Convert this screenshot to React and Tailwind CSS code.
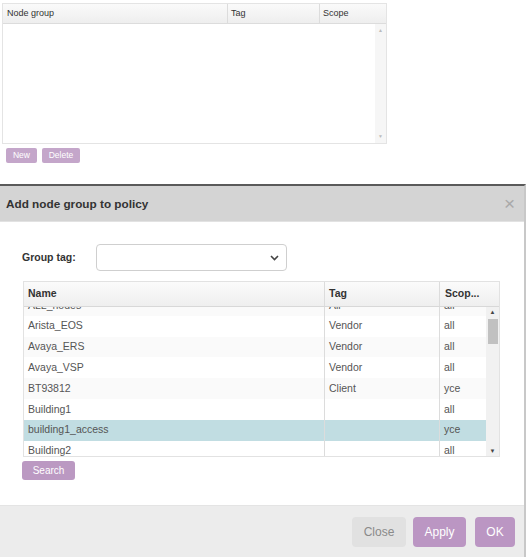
import React from 'react';

const rows = [
  { name: 'ALL_nodes', tag: 'All', scope: 'all' },
  { name: 'Arista_EOS', tag: 'Vendor', scope: 'all' },
  { name: 'Avaya_ERS', tag: 'Vendor', scope: 'all' },
  { name: 'Avaya_VSP', tag: 'Vendor', scope: 'all' },
  { name: 'BT93812', tag: 'Client', scope: 'yce' },
  { name: 'Building1', tag: '', scope: 'all' },
  { name: 'building1_access', tag: '', scope: 'yce', selected: true },
  { name: 'Building2', tag: '', scope: 'all' },
];

export default function App() {
  return (
    <div className="relative w-[529px] h-[557px] bg-white overflow-hidden font-['Liberation_Sans',Arial,sans-serif]">
      {/* Node group table */}
      <div className="pt-[3px] pl-[2px]">
        <div className="w-[385px] h-[141px] border border-[#e4e4e4] flex flex-col">
          <div className="flex h-[20px] shrink-0 border-b border-[#dcdcdc] bg-gradient-to-b from-[#fafafa] to-[#eeeeee] text-[9px] text-[#333]">
            <div className="w-[225px] px-[4px] flex items-center border-r border-[#dcdcdc]">Node group</div>
            <div className="w-[92px] px-[3px] flex items-center border-r border-[#dcdcdc]">Tag</div>
            <div className="flex-1 px-[3px] flex items-center">Scope</div>
          </div>
          <div className="flex-1 flex">
            <div className="flex-1" />
            <div className="w-[11px] bg-[#f6f6f6] flex flex-col items-center justify-between py-[3px] text-[5px] text-[#bbb]">
              <span>▲</span>
              <span>▼</span>
            </div>
          </div>
        </div>
        <div className="flex gap-[5px] mt-[4px] ml-[4px]">
          <button className="h-[15px] w-[31px] rounded-[2px] bg-[#c4a6ca] text-white text-[8.5px] leading-none">New</button>
          <button className="h-[15px] w-[38px] rounded-[2px] bg-[#c4a6ca] text-white text-[8.5px] leading-none">Delete</button>
        </div>
      </div>

      {/* Dialog */}
      <div className="absolute left-0 top-[184px] w-[526px] h-[373px] bg-white border-t-2 border-r-2 border-t-[#5a5a5a] border-r-[#c8c8c8] flex flex-col">
        <div className="h-[36px] shrink-0 bg-[#d4d4d4] flex items-center justify-between pl-[6px] pr-[9px] border-b border-[#e2e2e2]">
          <span className="text-[11.75px] font-bold text-[#333]">Add node group to policy</span>
          <span className="text-[19px] text-[#a9a9a9] leading-none">×</span>
        </div>

        <div className="flex-1 pl-[22px] pt-[22px]">
          <div className="flex items-center">
            <span className="w-[74px] text-[10.5px] font-bold text-[#333]">Group tag:</span>
            <div className="w-[191px] h-[27px] border border-[#cfcfcf] rounded-[4px] flex items-center justify-end pr-[7px]">
              <svg width="9" height="6" viewBox="0 0 9 6">
                <path d="M1 1 L4.5 4.5 L8 1" fill="none" stroke="#444" strokeWidth="1.6" />
              </svg>
            </div>
          </div>

          <div className="mt-[10px] ml-[1px] w-[477px] h-[176px] border border-[#e2e2e2] flex flex-col text-[10.5px]">
            <div className="flex h-[25px] shrink-0 border-b border-[#d8d8d8] bg-gradient-to-b from-[#fbfbfb] to-[#efefef] font-bold text-[#333]">
              <div className="w-[301px] px-[4px] flex items-center border-r border-[#dcdcdc]">Name</div>
              <div className="w-[115px] px-[4px] flex items-center border-r border-[#dcdcdc]">Tag</div>
              <div className="flex-1 px-[5px] flex items-center">Scop...</div>
            </div>
            <div className="flex-1 flex overflow-hidden">
              <div className="flex-1 overflow-hidden">
                <div className="-mt-[12px]">
                  {rows.map((r, i) => (
                    <div
                      key={r.name}
                      className={
                        'flex h-[20.8px] text-[#555] ' +
                        (r.selected ? 'bg-[#c1dde2]' : i % 2 ? 'bg-white' : 'bg-[#fafafa]')
                      }
                    >
                      <div className="w-[301px] px-[4px] flex items-center border-r border-[#dcdcdc]">{r.name}</div>
                      <div className="w-[115px] px-[4px] flex items-center border-r border-[#dcdcdc]">{r.tag}</div>
                      <div className="flex-1 px-[4px] flex items-center">{r.scope}</div>
                    </div>
                  ))}
                </div>
              </div>
              <div className="w-[13px] bg-[#f1f1f1] flex flex-col items-center py-[2px]">
                <span className="text-[6px] text-[#444] leading-none">▲</span>
                <div className="mt-[4px] w-[10px] h-[25px] bg-[#c1c1c1]" />
                <div className="flex-1" />
                <span className="text-[6px] text-[#444] leading-none">▼</span>
              </div>
            </div>
          </div>

          <button className="mt-[4px] h-[19px] w-[53px] rounded-[3px] bg-[#bb99c2] text-white text-[10px]">Search</button>
        </div>

        <div className="h-[52px] shrink-0 bg-[#ececec] border-t border-[#e4e4e4] flex items-start justify-end pt-[11px] pr-[9px]">
          <button className="h-[30px] w-[54px] mr-[7px] rounded-[4px] bg-[#e1e1e1] text-[#8a8a8a] text-[12px]">Close</button>
          <button className="h-[30px] w-[53px] mr-[9px] rounded-[4px] bg-[#bb96c3] text-white text-[12px]">Apply</button>
          <button className="h-[30px] w-[40px] rounded-[4px] bg-[#bb96c3] text-white text-[12px]">OK</button>
        </div>
      </div>
    </div>
  );
}
